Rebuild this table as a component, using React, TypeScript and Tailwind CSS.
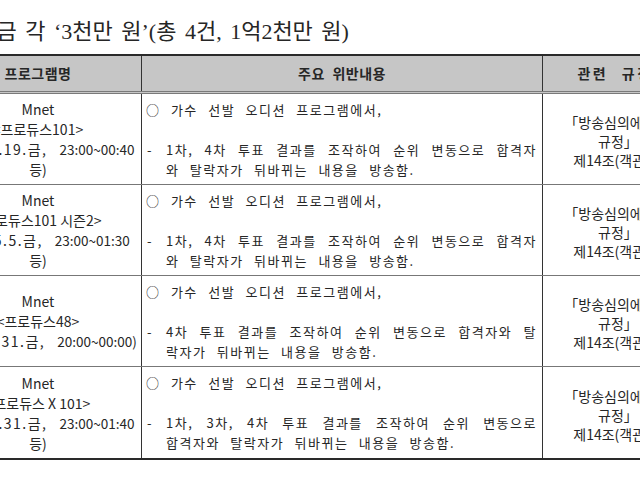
import React from "react";

type Row = {
  program: string[];
  date: string;
  time: string;
  tail?: string;
  lead: string;
  rest: string;
};

const rows: Row[] = [
  {
    program: ["Mnet", "<프로듀스101>"],
    date: "('16.2.19.금,",
    time: "23:00~00:40",
    tail: "등)",
    lead: "1차, 4차 투표 결과를 조작하여 순위 변동으로 합격자",
    rest: "와 탈락자가 뒤바뀌는 내용을 방송함.",
  },
  {
    program: ["Mnet", "<프로듀스101 시즌2>"],
    date: "('17.5.5.금,",
    time: "23:00~01:30",
    tail: "등)",
    lead: "1차, 4차 투표 결과를 조작하여 순위 변동으로 합격자",
    rest: "와 탈락자가 뒤바뀌는 내용을 방송함.",
  },
  {
    program: ["Mnet", "<프로듀스48>"],
    date: "('18.8.31.금,",
    time: "20:00~00:00)",
    lead: "4차 투표 결과를 조작하여 순위 변동으로 합격자와 탈",
    rest: "락자가 뒤바뀌는 내용을 방송함.",
  },
  {
    program: ["Mnet", "<프로듀스 X 101>"],
    date: "('19.5.31.금,",
    time: "23:00~01:40",
    tail: "등)",
    lead: "1차, 3차, 4차 투표 결과를 조작하여 순위 변동으로",
    rest: "합격자와 탈락자가 뒤바뀌는 내용을 방송함.",
  },
];

export default function App() {
  return (
    <div className="w-[640px] h-[480px] overflow-hidden bg-white text-[#262626] font-['Noto_Sans_CJK_KR',sans-serif]">
      {/* Title, cut off at the left like the scan */}
      <p className="pt-[18px] -ml-[44px] h-[46px] leading-[28px] text-[22px] whitespace-nowrap [word-spacing:3px] font-['Liberation_Serif','Noto_Sans_CJK_KR',serif]">
        과징금 각 ‘3천만 원’(총 4건, 1억2천만 원)
      </p>

      <div className="mt-[8px] -ml-[65px] w-[758px] border-t-2 border-b-2 border-[#2a2a2a]">
        {/* Header */}
        <div className="flex h-[38px] bg-[#c6c6c6] border-b-[3px] border-double border-[#7a7a7a] font-bold text-[14px] tracking-[0.5px]">
          <div className="w-[207px] shrink-0 border-r border-solid border-[#333] flex items-center justify-center">
            프로그램명
          </div>
          <div className="w-[401px] shrink-0 border-r border-solid border-[#333] flex items-center justify-center [word-spacing:4px]">
            주요 위반내용
          </div>
          <div className="w-[150px] shrink-0 flex items-center justify-center pr-[6px] tracking-[2.5px] [word-spacing:8px]">
            관련 규정
          </div>
        </div>

        {rows.map((row, i) => (
          <div
            key={i}
            className={`flex h-[91px] ${i < rows.length - 1 ? "border-b border-[#777]" : ""}`}
          >
            <div className="w-[207px] shrink-0 border-r border-[#333] flex flex-col items-center justify-center text-center text-[14px] leading-[20px] whitespace-nowrap">
              {row.program.map((line, j) => (
                <div key={j}>{line}</div>
              ))}
              <div className="flex items-baseline gap-[12px] ml-[12px]">
                <span className="tracking-[1.5px]">{row.date}</span>
                <span className="text-[13.5px]">{row.time}</span>
              </div>
              {row.tail && <div>{row.tail}</div>}
            </div>

            <div className="w-[401px] shrink-0 border-r border-[#333] pt-[6px] pl-[4px] pr-[5px] text-[13px] leading-[20px] tracking-[1.5px] [word-spacing:6px] whitespace-nowrap">
              <div>○ 가수 선발 오디션 프로그램에서,</div>
              <div className="h-[20px]" />
              <div className="flex">
                <span className="w-[20px] shrink-0 pl-[1px]">-</span>
                <div className="flex-1">
                  <div className="text-justify [text-align-last:justify]">{row.lead}</div>
                  <div>{row.rest}</div>
                </div>
              </div>
            </div>

            <div className="w-[150px] shrink-0 pt-[5px] flex flex-col justify-center items-center text-center text-[14px] leading-[19px] whitespace-nowrap">
              <div>「방송심의에 관한</div>
              <div>규정」</div>
              <div>제14조(객관성)</div>
            </div>
          </div>
        ))}
      </div>
    </div>
  );
}
